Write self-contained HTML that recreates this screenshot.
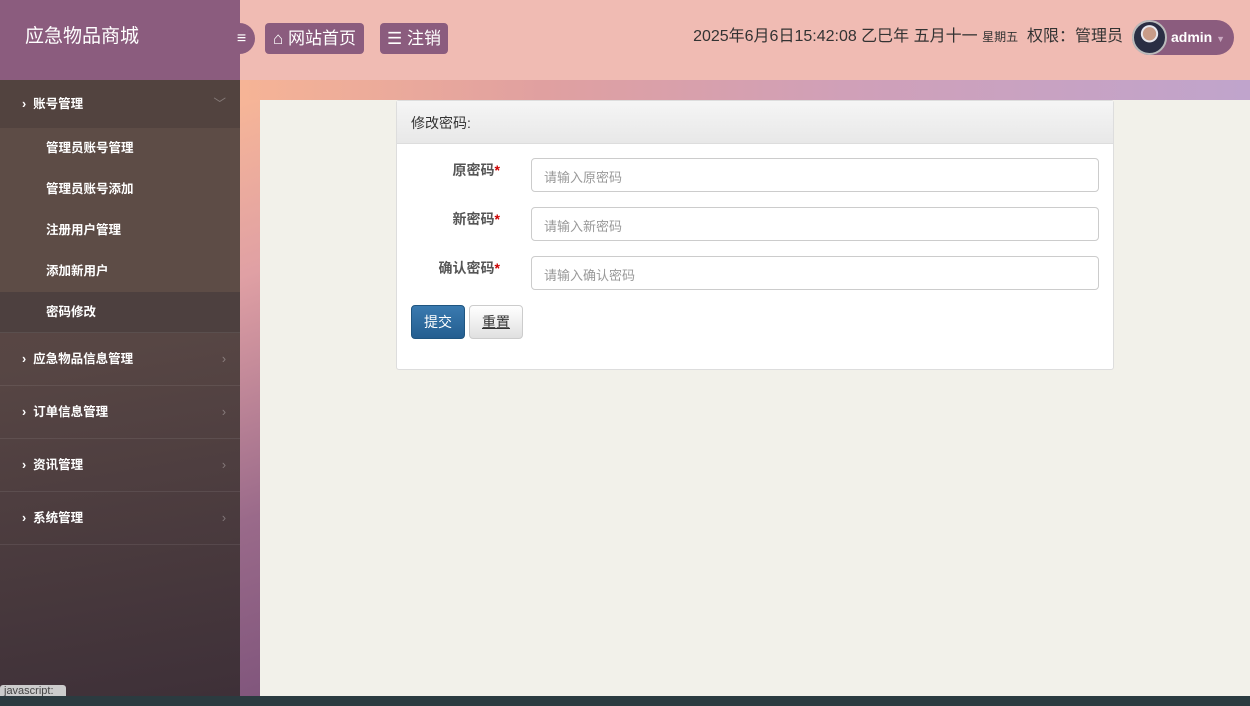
<!DOCTYPE html>
<html><head><meta charset="utf-8"><style>
*{margin:0;padding:0;box-sizing:border-box}
body{width:1250px;height:706px;overflow:hidden;position:relative;font-family:"Liberation Sans","Noto Sans CJK SC",sans-serif;background:#f2f1ea}
.bg{position:absolute;left:240px;top:80px;width:1010px;height:616px;background:linear-gradient(160deg,#f9b896 0%,#e0a0a4 20%,#9a6a8a 45%,#6a4470 80%)}
.bg2{position:absolute;left:240px;top:80px;width:1010px;height:20px;background:linear-gradient(90deg,#f6b496,#e0a0a0 30%,#d0a0b8 60%,#c0a4cc)}
.content{position:absolute;left:260px;top:100px;width:990px;height:596px;background:#f2f1ea}
.side{position:absolute;left:0;top:0;width:240px;height:696px;background:linear-gradient(170deg,#5e4b45 0%,#574644 50%,#3e3038 100%)}
.logo{position:absolute;left:0;top:0;width:240px;height:80px;background:#8b5c7e;color:#fff;font-size:19px;padding:21px 25px}
.top{position:absolute;left:240px;top:0;width:1010px;height:80px;background:#f0bbb3}
.btn{position:absolute;top:23px;height:31px;background:#8b5c7e;color:#fff;border-radius:4px;font-size:17px;line-height:31px;padding:0 8px}
.tog{position:absolute;left:228px;top:23px;width:27px;height:31px;border-radius:0 16px 16px 0;background:#8b5c7e;color:#fff;font-size:16px;font-weight:bold;line-height:31px;text-align:center}
.m{position:absolute;left:0;width:240px;color:#fff;font-size:12.5px;font-weight:bold}
.b{border-bottom:1px solid rgba(255,255,255,.08)}
.sub{padding-left:46px;height:41px;line-height:41px;background:#5d4c46}
.ar{position:absolute;right:14px;color:rgba(255,255,255,.3);font-weight:normal}
.panel{position:absolute;left:396px;top:100px;width:718px;height:270px;background:#fff;border:1px solid #ddd;border-radius:3px}
.ph{height:43px;background:linear-gradient(#f5f5f5,#e8e8e8);border-bottom:1px solid #ddd;padding:12px 14px;font-size:14px;color:#333}
.lab{position:absolute;right:613px;font-size:14px;font-weight:bold;color:#555}
.lab b{color:#c00}
.in{position:absolute;left:134px;width:568px;height:34px;border:1px solid #ccc;border-radius:4px;font-size:13px;color:#999;padding:8px 12px}
</style></head><body>
<div class="bg"></div><div class="bg2"></div><div class="content"></div>
<div class="side"></div>
<div class="logo">应急物品商城</div>
<div class="top">
<div style="position:absolute;right:16px;top:20px;height:35px;width:102px;border-radius:18px;background:#8b5c7e;color:#fff;font-size:14px;font-weight:bold;line-height:35px;padding-left:39px">admin <span style="color:#c9a8c0;font-size:9px">▼</span></div>
<div style="position:absolute;right:83px;top:20px;width:35px;height:35px;border-radius:50%;background:radial-gradient(circle at 50% 38%,#c89c88 0 26%,#e8e8ee 28% 34%,#2a2e44 36%);border:2px solid #bbb"></div>
<div style="position:absolute;right:127px;top:27px;font-size:16px;color:#333;line-height:20px">2025年6月6日15:42:08 乙巳年 五月十一 <span style="font-size:12px">星期五</span>&nbsp; 权限：管理员</div>
</div>
<div class="tog">≡</div>
<div class="btn" style="left:265px">&#8962; 网站首页</div>
<div class="btn" style="left:380px;padding:0 7px">☰ 注销</div>
<div class="m" style="top:80px;height:50px;line-height:48px;padding-left:22px;background:#52433f">›&nbsp; 账号管理<span class="ar">﹀</span></div>
<div class="m sub" style="top:128px">管理员账号管理</div>
<div class="m sub" style="top:169px">管理员账号添加</div>
<div class="m sub" style="top:210px">注册用户管理</div>
<div class="m sub" style="top:251px">添加新用户</div>
<div class="m sub b" style="top:292px;background:#4d403f">密码修改</div>
<div class="m b" style="top:333px;height:53px;line-height:53px;padding-left:22px">›&nbsp; 应急物品信息管理<span class="ar">›</span></div>
<div class="m b" style="top:386px;height:53px;line-height:53px;padding-left:22px">›&nbsp; 订单信息管理<span class="ar">›</span></div>
<div class="m b" style="top:439px;height:53px;line-height:53px;padding-left:22px">›&nbsp; 资讯管理<span class="ar">›</span></div>
<div class="m b" style="top:492px;height:53px;line-height:53px;padding-left:22px">›&nbsp; 系统管理<span class="ar">›</span></div>
<div class="panel">
<div class="ph">修改密码:</div>
<div class="lab" style="top:59px">原密码<b>*</b></div><div class="in" style="top:57px">请输入原密码</div>
<div class="lab" style="top:108px">新密码<b>*</b></div><div class="in" style="top:106px">请输入新密码</div>
<div class="lab" style="top:157px">确认密码<b>*</b></div><div class="in" style="top:155px">请输入确认密码</div>
<div style="position:absolute;left:14px;top:204px;width:54px;height:34px;background:linear-gradient(#3a7ab0,#245e90);border:1px solid #1f5580;border-radius:4px;color:#fff;font-size:14px;text-align:center;line-height:32px">提交</div>
<div style="position:absolute;left:72px;top:204px;width:54px;height:34px;background:linear-gradient(#fff,#e0e0e0);border:1px solid #ccc;border-radius:4px;color:#333;font-size:14px;text-align:center;line-height:32px;text-decoration:underline">重置</div>
</div>
<div style="position:absolute;left:0;top:685px;width:66px;height:14px;background:#ccc;border-radius:3px;font-size:11px;color:#444;padding-left:4px">javascript:</div>
<div style="position:absolute;left:0;top:696px;width:1250px;height:10px;background:#2b3b40"></div>
</body></html>
